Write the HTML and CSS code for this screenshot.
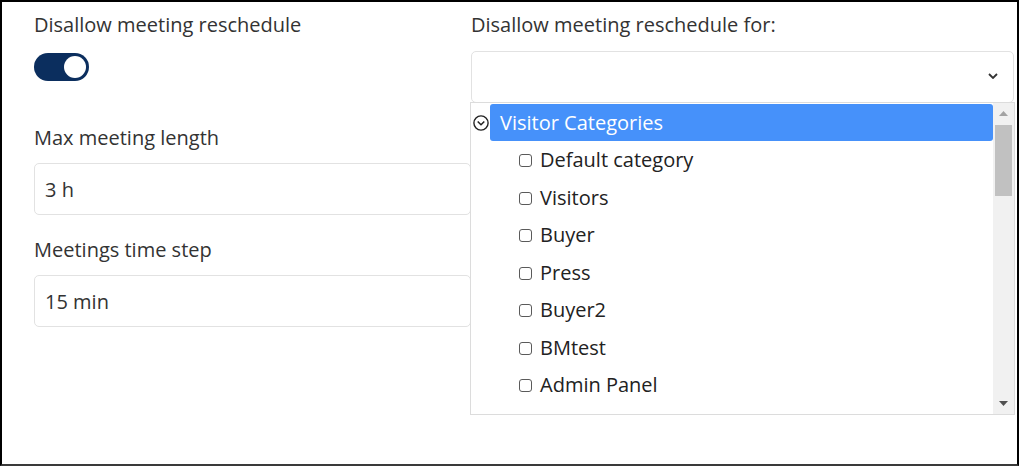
FILE: index.html
```html
<!DOCTYPE html>
<html lang="en">
<head>
<meta charset="utf-8">
<title>Meeting settings</title>
<link rel="stylesheet" href="styles.css">
</head>
<body>
<div class="form">
  <div class="col">
    <div class="field">
      <div class="label">Disallow meeting reschedule</div>
      <div class="switch"><span class="knob"></span></div>
    </div>
    <div class="field field-2">
      <div class="label">Max meeting length</div>
      <div class="input">3 h</div>
    </div>
    <div class="field field-3">
      <div class="label">Meetings time step</div>
      <div class="input">15 min</div>
    </div>
  </div>
  <div class="col">
    <div class="label label-right">Disallow meeting reschedule for:</div>
    <div class="select">
      <svg class="chevron" width="10" height="6" viewBox="0 0 10 6"><path d="M1 1 L5 5 L9 1" fill="none" stroke="#333" stroke-width="1.8"/></svg>
      <div class="dropdown">
        <div class="options">
          <div class="group">
            <span class="group-icon"><svg width="16" height="16" viewBox="0 0 16 16"><circle cx="8" cy="8" r="7.1" fill="none" stroke="#222" stroke-width="1.4"/><path d="M4.7 6.5 L8 9.8 L11.3 6.5" fill="none" stroke="#222" stroke-width="1.5"/></svg></span>
            <span class="group-label">Visitor Categories</span>
          </div>
          <div class="option"><span class="cb"></span>Default category</div>
          <div class="option"><span class="cb"></span>Visitors</div>
          <div class="option"><span class="cb"></span>Buyer</div>
          <div class="option"><span class="cb"></span>Press</div>
          <div class="option"><span class="cb"></span>Buyer2</div>
          <div class="option"><span class="cb"></span>BMtest</div>
          <div class="option"><span class="cb"></span>Admin Panel</div>
        </div>
        <div class="scrollbar">
          <div class="arrow"><svg width="9" height="5" viewBox="0 0 9 5"><path d="M0 5 L4.5 0 L9 5 Z" fill="#a3a3a3"/></svg></div>
          <div class="track"><div class="thumb"></div></div>
          <div class="arrow"><svg width="9" height="5" viewBox="0 0 9 5"><path d="M0 0 L4.5 5 L9 0 Z" fill="#505050"/></svg></div>
        </div>
      </div>
    </div>
  </div>
</div>
</body>
</html>
```
FILE: styles.css
```css
* { box-sizing: border-box; }
html, body { margin: 0; }
body {
  width: 1019px;
  height: 466px;
  border: 2px solid #000;
  border-bottom-color: #3a3a3a;
  padding: 8px 3px 0 32px;
  font-family: "Open Sans", "Liberation Sans", sans-serif;
  font-size: 20px;
  color: #333;
  background: #fff;
  overflow: hidden;
}
.form {
  display: grid;
  grid-template-columns: 437px 1fr;
}
.label {
  line-height: 30px;
  margin-bottom: 10px;
  white-space: nowrap;
}
.label-right { margin-bottom: 11px; }
.switch {
  margin-top: 13px;
  width: 55px;
  height: 28px;
  border-radius: 14px;
  background: #0b2e5e;
  display: flex;
  justify-content: flex-end;
  padding: 3px;
}
.knob {
  width: 22px;
  height: 22px;
  border-radius: 50%;
  background: #fff;
}
.field-2 { margin-top: 42px; }
.field-3 { margin-top: 20px; }
.input {
  height: 52px;
  border: 1px solid #e2e2e2;
  border-radius: 5px;
  padding-left: 10px;
  display: flex;
  align-items: center;
  color: #333;
}
.select {
  position: relative;
  height: 52px;
  border: 1px solid #e2e2e2;
  border-radius: 5px;
}
.chevron {
  position: absolute;
  right: 15px;
  top: 21px;
}
.dropdown {
  position: absolute;
  top: 50px;
  left: -2px;
  right: -2px;
  height: 313px;
  border: 1px solid #dcdcdc;
  background: #fff;
  display: flex;
  overflow: hidden;
  z-index: 2;
}
.options {
  flex: 1;
  padding-top: 1px;
  overflow: hidden;
  color: #222;
}
.group {
  display: flex;
  height: 37px;
}
.group-icon {
  width: 19px;
  flex: none;
  display: flex;
  padding: 11px 0 0 2px;
}
.group-label {
  flex: 1;
  background: #4691fa;
  color: #fff;
  border-radius: 3px;
  padding-left: 10px;
  line-height: 37px;
  white-space: nowrap;
}
.option {
  height: 37.5px;
  line-height: 37.5px;
  padding-left: 48px;
  white-space: nowrap;
}
.cb {
  display: inline-block;
  width: 13px;
  height: 13px;
  border: 1px solid #5a5a5a;
  border-radius: 3px;
  margin-right: 8px;
  background: #fff;
}
.scrollbar {
  width: 21px;
  flex: none;
  background: #f1f1f1;
  display: flex;
  flex-direction: column;
}
.arrow {
  height: 21px;
  display: flex;
  align-items: center;
  justify-content: center;
  flex: none;
}
.track {
  flex: 1;
  padding: 1px 2px 0 2px;
}
.thumb {
  height: 71px;
  background: #c1c1c1;
}
```
